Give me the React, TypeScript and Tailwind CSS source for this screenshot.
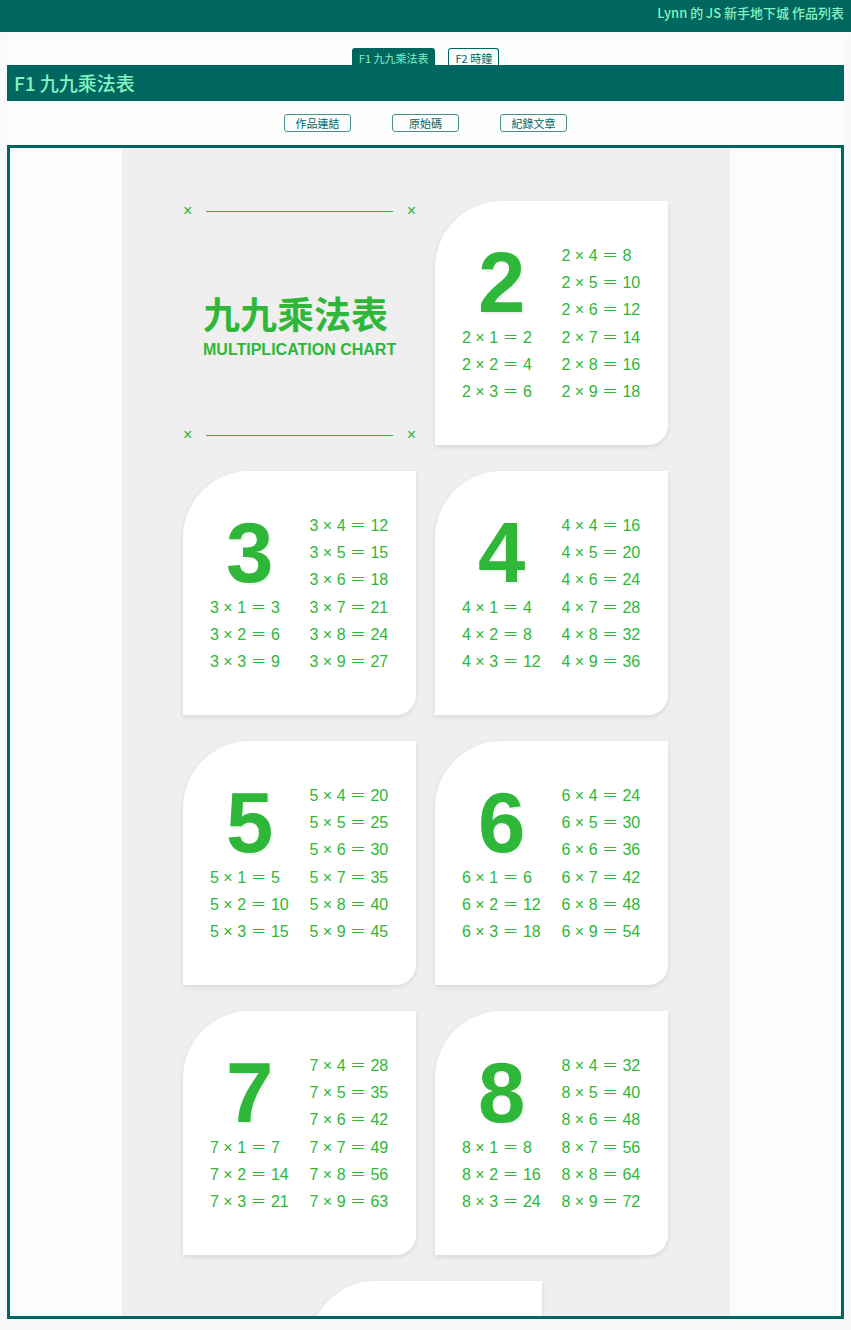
const tabs = [
  { id: 'f1', label: 'F1 九九乘法表', active: true },
  { id: 'f2', label: 'F2 時鐘', active: false },
];

const links = ['作品連結', '原始碼', '紀錄文章'];

function Formula({ n, m }: { n: number; m: number }) {
  return (
    <li className="flex items-center whitespace-nowrap">
      {n} × {m} ＝ {n * m}
    </li>
  );
}

function Card({ n }: { n: number }) {
  return (
    <section className="grid w-[233px] grid-cols-2 gap-x-5 rounded-tl-[67px] rounded-br-[20px] bg-white px-[27px] pt-[41px] pb-[39px] shadow-[0_2px_5px_rgba(0,0,0,0.1)]">
      <div className="grid h-[164px] grid-rows-6">
        <h3 className="row-span-3 flex items-center justify-center pb-[2px] text-[85px] leading-none font-bold [text-shadow:2px_2px_1px_#f0f0f0]">
          {n}
        </h3>
        <ul className="contents">
          {[1, 2, 3].map((m) => (
            <Formula key={m} n={n} m={m} />
          ))}
        </ul>
      </div>
      <ul className="grid h-[164px] grid-rows-6">
        {[4, 5, 6, 7, 8, 9].map((m) => (
          <Formula key={m} n={n} m={m} />
        ))}
      </ul>
    </section>
  );
}

function Rule() {
  return (
    <div className="flex items-center gap-[14px] leading-5">
      <span>×</span>
      <span className="h-px flex-1 bg-[#2eb738]" />
      <span>×</span>
    </div>
  );
}

function Chart() {
  return (
    <div className="mx-auto w-full max-w-[608px] bg-[#efefef] py-[53px] font-['Liberation_Sans','Noto_Sans_CJK_TC',sans-serif] text-base text-[#2eb738]">
      <div className="mx-auto flex max-w-[485px] flex-wrap justify-center gap-x-[19px] gap-y-[26px]">
        <div className="flex w-[233px] flex-col justify-between">
          <Rule />
          <div className="pt-2.5 pl-5">
            <h2 className="text-[37px] leading-[44px] font-bold">九九乘法表</h2>
            <p className="leading-[22px] font-bold whitespace-nowrap">MULTIPLICATION CHART</p>
          </div>
          <Rule />
        </div>
        {[2, 3, 4, 5, 6, 7, 8, 9].map((n) => (
          <Card key={n} n={n} />
        ))}
      </div>
    </div>
  );
}

export default function App() {
  return (
    <div className="flex h-screen flex-col bg-[#f8f9fb] font-['Noto_Sans_CJK_TC',sans-serif] text-[11px] text-[#006660]">
      <header className="flex h-8 shrink-0 justify-end bg-[#006660] px-[7px] pt-[3px]">
        <h1 className="text-[13px] leading-5 font-medium text-[#85f2c0]">Lynn 的 JS 新手地下城 作品列表</h1>
      </header>
      <main className="mx-[7px] mt-[7px] mb-[11px] flex min-h-0 flex-1 flex-col bg-[#fbfdfc]">
        <nav className="flex h-[26px] shrink-0 items-end justify-center gap-[13px]">
          {tabs.map((t) => (
            <a
              key={t.id}
              href={`#${t.id}`}
              className={
                t.active
                  ? 'h-[17px] rounded-t-[3px] bg-[#006660] px-[7px] leading-5 text-[#85f2c0]'
                  : 'h-[17px] rounded-t-[3px] border border-b-0 border-[#006660] px-[6px] leading-[18px]'
              }
            >
              {t.label}
            </a>
          ))}
        </nav>
        <h2 className="h-9 shrink-0 bg-[#006660] px-[7px] text-[19px] leading-[35px] font-medium text-[#85f2c0]">
          F1 九九乘法表
        </h2>
        <div className="flex h-11 shrink-0 items-center justify-center gap-[41px]">
          {links.map((l) => (
            <a
              key={l}
              href="#"
              className="h-[18px] w-[67px] rounded-[3px] border border-[#006660]/70 text-center leading-[17px]"
            >
              {l}
            </a>
          ))}
        </div>
        <div className="min-h-0 flex-1 overflow-y-auto border-[3px] border-[#006660] [scrollbar-width:none]">
          <Chart />
        </div>
      </main>
    </div>
  );
}
